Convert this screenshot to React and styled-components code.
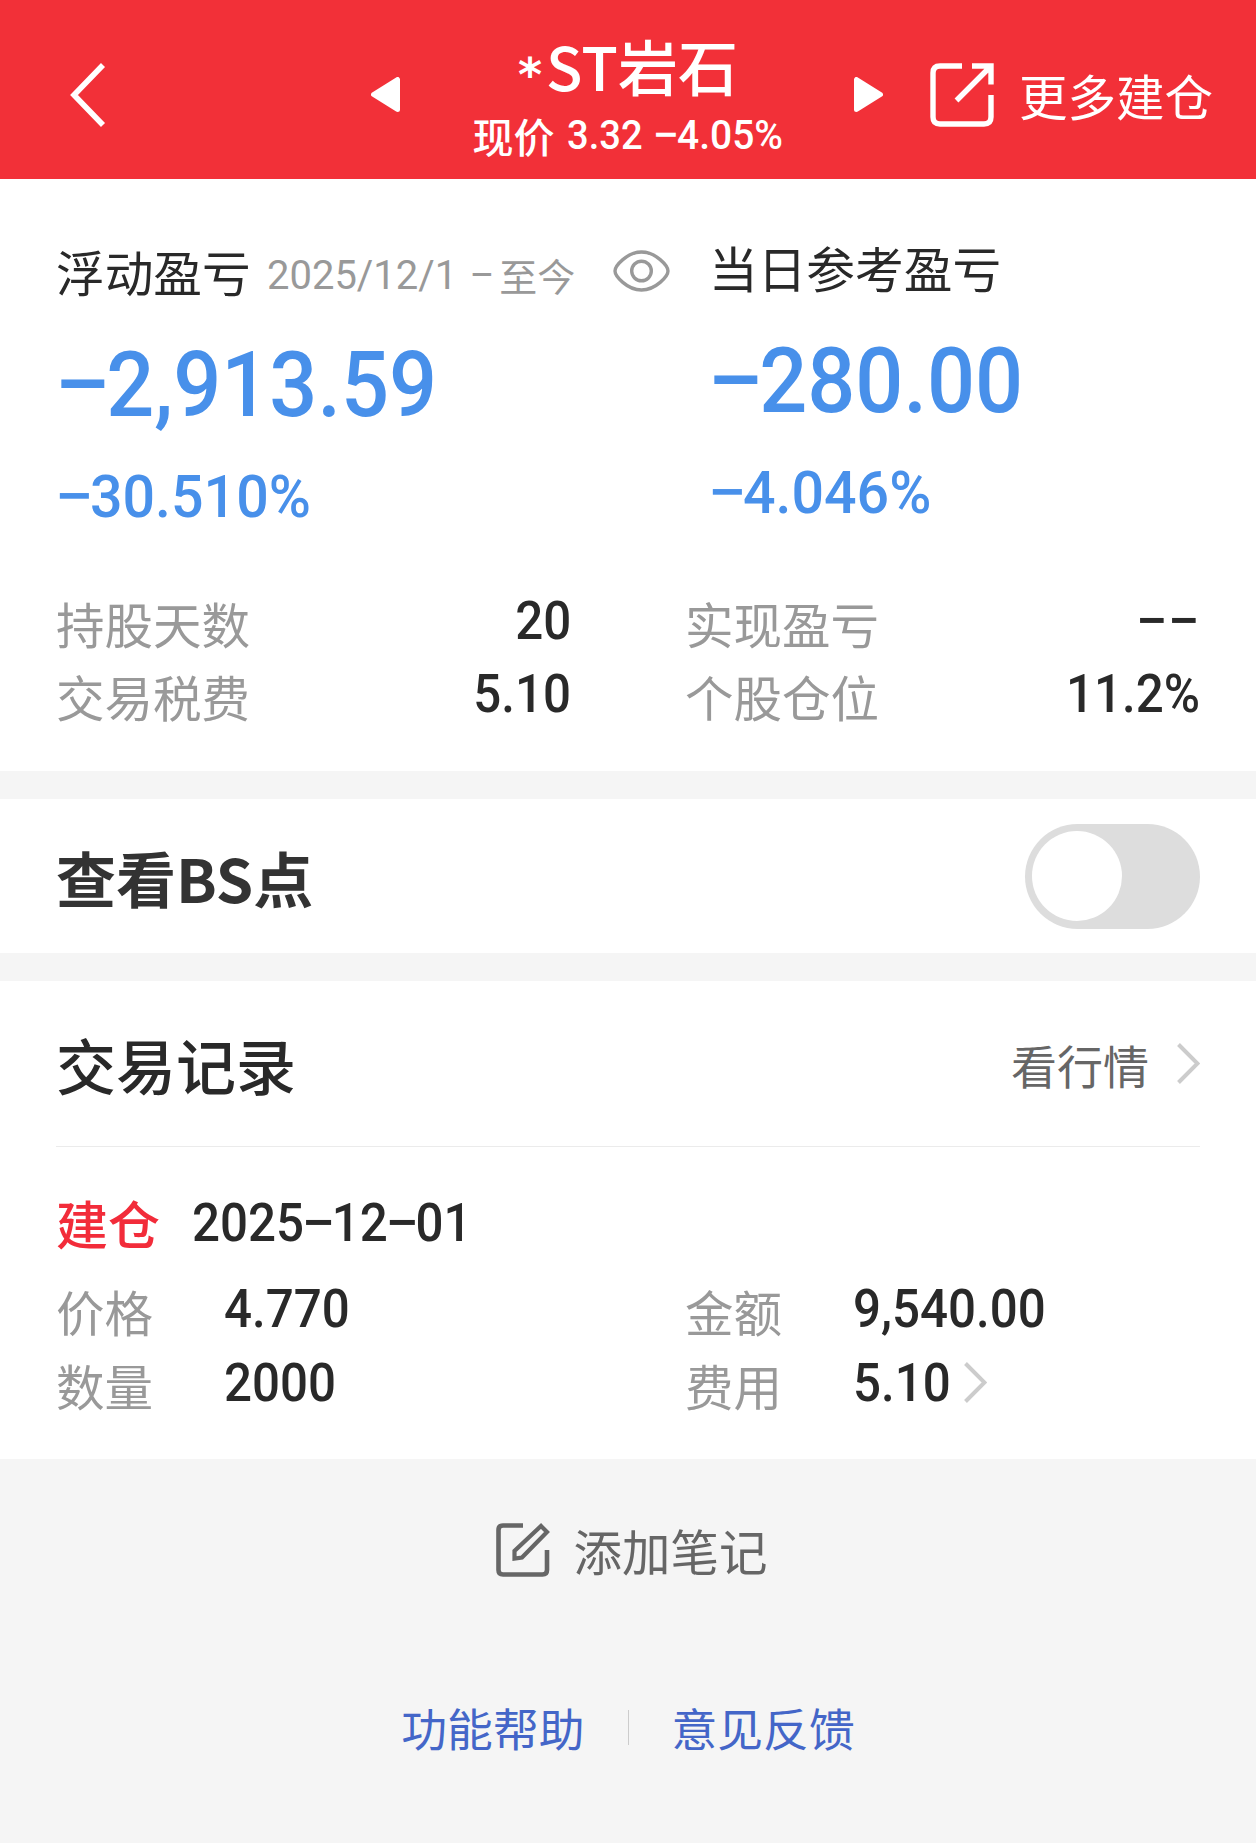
import { useState } from "react";
import styled, { createGlobalStyle } from 'styled-components';

const GlobalStyle = createGlobalStyle`
    * {
        box-sizing: border-box;
    }
    body {
        margin: 0;
        background: #f5f5f5;
        font-family: "Noto Sans CJK SC", "Liberation Sans", sans-serif;
        color: #292929;
    }
`

const Page = styled.div`
    width: 1256px;
    min-height: 1843px;
    background: #f5f5f5;
`

/* header */
const Header = styled.header`
    display: grid;
    grid-template-columns: 371px 29px 454px 29px 1fr;
    align-items: center;
    height: 179px;
    background: #f23038;
    color: white;
`

const BackButton = styled.button`
    display: flex;
    padding: 11px 0 0 70px;
    border: none;
    background: none;
`

const ArrowButton = styled.button`
    display: flex;
    padding: 10px 0 0;
    border: none;
    background: none;
`

const Heading = styled.div`
    display: flex;
    flex-direction: column;
    align-items: center;
    gap: 5px;
    padding-top: 15px;
`

const StockName = styled.h1`
    margin: 0;
    padding-left: 2px;
    font-size: 60px;
    font-weight: 500;
    line-height: 70px;
`

const Star = styled.span`
    margin-right: 4px;
    font-family: "DejaVu Sans", sans-serif;
    font-size: 46px;
    font-weight: 700;
    line-height: 0;
`

const StockPrice = styled.div`
    display: flex;
    gap: 13px;
    height: 60px;
    padding-left: 8px;
    font-size: 41px;
    font-weight: 500;
    line-height: 60px;
`

const MoreButton = styled.button`
    display: flex;
    align-items: center;
    gap: 25px;
    padding: 10px 0 0 47px;
    border: none;
    background: none;
    color: white;
    font-family: inherit;
    font-size: 48.5px;
    line-height: 60px;
    white-space: nowrap;
`

/* digits are set a little narrower than the font draws them */
const Digits = styled.span`
    display: inline-block;
    font-family: Roboto, "Liberation Sans", sans-serif;
    font-size: ${({ $size }) => $size || 53}px;
    font-weight: ${({ $weight }) => $weight || 500};
    line-height: ${({ $line }) => $line || 60}px;
    margin-left: ${({ $pull }) => $pull ? -8 : 0}px;
    white-space: nowrap;
    transform: scaleX(${({ $narrow }) => $narrow || 0.93});
    transform-origin: ${({ $right }) => $right ? 'right' : 'left'} center;
`

const Minus = styled.span`
    display: inline-block;
    margin-left: ${({ $lead }) => $lead ? 0.03 : 0}em;
    transform: scaleX(1.22);
`

const Panel = styled.section`
    background: white;
    margin-bottom: 28px;
`

/* profit summary */
const Summary = styled(Panel)`
    height: 592px;
    padding: 58px 56px 0;
`

const ProfitRow = styled.div`
    display: grid;
    grid-template-columns: 653px 1fr;
    height: 354px;
`

const Profit = styled.div`
    display: flex;
    flex-direction: column;
    padding-top: ${({ $lower }) => $lower ? 4 : 0}px;
    color: #4890ea;
`

const ProfitTitle = styled.div`
    display: flex;
    align-items: center;
    height: 60px;
    color: #292929;
    font-size: 48.7px;
    line-height: 60px;
    white-space: nowrap;
`

const Period = styled.span`
    display: flex;
    flex-shrink: 0;
    gap: 7px;
    width: 346px;
    margin-left: 16px;
    padding-top: 7px;
    color: #999;
    font-size: 38px;
    line-height: 60px;
`

const Amount = styled.div`
    margin-top: 34px;
    height: 100px;
`

const Percent = styled.div`
    margin-top: 32px;
    height: 60px;
`

const Stats = styled.div`
    display: grid;
    grid-template-columns: 515px 515px;
    column-gap: 114px;
`

const Stat = styled.div`
    display: flex;
    justify-content: space-between;
    height: 73px;
`

const Label = styled.span`
    color: #999;
    font-size: 48.5px;
    line-height: 60px;
    padding-top: 2px;
`

/* BS switch */
const SwitchPanel = styled(Panel)`
    display: flex;
    align-items: center;
    justify-content: space-between;
    height: 154px;
    padding: 0 56px;
    color: #333;
    font-size: 60px;
    font-weight: 700;
`

const Toggle = styled.button`
    width: 175px;
    height: 105px;
    padding: 7px;
    border: none;
    border-radius: 53px;
    background: ${({ $on }) => $on ? '#f23038' : '#ddd'};
`

const Knob = styled.span`
    display: block;
    width: 90px;
    height: 90px;
    border-radius: 50%;
    background: white;
    margin-left: ${({ $on }) => $on ? 71 : 0}px;
`

/* trade records */
const Records = styled(Panel)`
    height: 478px;
    margin-bottom: 0;
    padding: 0 56px;
`

const RecordsHead = styled.div`
    display: flex;
    align-items: center;
    justify-content: space-between;
    height: 166px;
    border-bottom: 1px solid #ebebeb;
`

const RecordsTitle = styled.h2`
    margin: 0;
    font-size: 60px;
    font-weight: 500;
    line-height: 80px;
`

const QuoteLink = styled.a`
    display: flex;
    align-items: center;
    gap: 28px;
    color: #666;
    font-size: 46px;
    line-height: 60px;
`

const TradeHead = styled.div`
    display: flex;
    gap: 32px;
    height: 90px;
    padding-top: 46px;
`

const TradeType = styled.span`
    color: #f22c3a;
    font-size: 52px;
    font-weight: 500;
    line-height: 60px;
`

const TradeGrid = styled.div`
    display: grid;
    grid-template-columns: 629px 1fr;
    padding-top: 42px;
`

const TradeField = styled.div`
    display: flex;
    height: 73.5px;

    ${Label} {
        width: 168px;
    }
`

const FeeLink = styled.a`
    display: flex;
    align-items: center;
    gap: 6px;
    height: 60px;
`

/* footer */
const NoteButton = styled.button`
    display: flex;
    align-items: center;
    justify-content: center;
    gap: 23px;
    width: 100%;
    height: 182px;
    padding: 0 0 0 8px;
    border: none;
    background: none;
    color: #666;
    font-family: inherit;
    font-size: 48.5px;
    line-height: 60px;
`

const Links = styled.nav`
    display: flex;
    align-items: center;
    justify-content: center;
    gap: 43px;
    height: 172px;
    color: #4466c8;
    font-size: 45.8px;
    line-height: 60px;
`

const LinkDivider = styled.span`
    width: 1px;
    height: 35px;
    background: #ccc;
`

// a minus in front of a digit is drawn wider than the font's own
function Num({ children, ...props }) {
    const parts = children.split(/(−(?=\d))/)

    return (
        <Digits {...props}>
            {parts.map((part, i) => (
                i % 2
                    ? <Minus key={i} $lead={!parts[i - 1]}>{part}</Minus>
                    : part
            ))}
        </Digits>
    )
}

function Chevron() {
    return (
        <svg width="23" height="41" viewBox="0 0 23 41" fill="none">
            <path d="M1.5 1.5L20.5 20.5L1.5 39.5" stroke="#ccc" strokeWidth="4" />
        </svg>
    )
}

function BackIcon() {
    return (
        <svg width="36" height="64" viewBox="0 0 36 64" fill="none">
            <path d="M33 2L4 32L33 62" stroke="white" strokeWidth="5.6" />
        </svg>
    )
}

function Triangle({ right }) {
    return (
        <svg width="29" height="35" viewBox="0 0 29 35">
            <path
                d={right
                    ? "M2.5 2.5V32.5L26.5 17.5Z"
                    : "M26.5 2.5V32.5L2.5 17.5Z"}
                fill="white" stroke="white" strokeWidth="5" strokeLinejoin="round"
            />
        </svg>
    )
}

function ShareIcon() {
    return (
        <svg width="64" height="64" viewBox="0 0 64 64" fill="none" stroke="white" strokeWidth="5.4">
            <path d="M32 3H10Q3 3 3 10V54Q3 61 10 61H54Q61 61 61 54V32" />
            <path d="M42 3H61V21.5M60 4L26.5 37.5" />
        </svg>
    )
}

function EyeIcon() {
    return (
        <svg width="57" height="42" viewBox="0 0 57 42" fill="none" stroke="#999" strokeWidth="3.4">
            <path d="M2 21C2 16 14 2 28.5 2S55 16 55 21S43 40 28.5 40S2 26 2 21Z" />
            <circle cx="28.5" cy="21" r="9.8" />
        </svg>
    )
}

function NoteIcon() {
    return (
        <svg width="54" height="54" viewBox="0 0 54 54" fill="none" stroke="#666" strokeWidth="4.6">
            <path d="M27 2.5H7Q2.5 2.5 2.5 7V47Q2.5 51.5 7 51.5H46.5Q51 51.5 51 47V27" />
            <path d="M18.5 35.5V28L45 3L51 9L26 34.5Z" strokeWidth="4.2" />
        </svg>
    )
}

const stats = [
    { label: '持股天数', value: '20' },
    { label: '实现盈亏', value: '−−', narrow: 1.07 },
    { label: '交易税费', value: '5.10' },
    { label: '个股仓位', value: '11.2%' },
]

const trade = [
    { label: '价格', value: '4.770' },
    { label: '金额', value: '9,540.00' },
    { label: '数量', value: '2000' },
    { label: '费用', value: '5.10', link: true },
]

function App() {
    const [showBS, setShowBS] = useState(false);

    return (
        <Page>
            <GlobalStyle />
            <Header>
                <BackButton><BackIcon /></BackButton>
                <ArrowButton><Triangle /></ArrowButton>
                <Heading>
                    <StockName><Star>*</Star>ST岩石</StockName>
                    <StockPrice>
                        <span>现价</span>
                        <Num $size={41}>3.32</Num>
                        <Num $size={41} $narrow={0.95} $pull>−4.05%</Num>
                    </StockPrice>
                </Heading>
                <ArrowButton><Triangle right /></ArrowButton>
                <MoreButton>
                    <ShareIcon />
                    <span>更多建仓</span>
                </MoreButton>
            </Header>

            <Summary>
                <ProfitRow>
                    <Profit $lower>
                        <ProfitTitle>
                            浮动盈亏
                            <Period>
                                <Num $size={41} $weight={400} $narrow={0.975}>2025/12/1</Num>
                                <Num $size={41} $weight={400} $narrow={1.1}>−</Num>
                                <span>至今</span>
                            </Period>
                            <EyeIcon />
                        </ProfitTitle>
                        <Amount><Num $size={91} $line={100}>−2,913.59</Num></Amount>
                        <Percent><Num $size={60} $narrow={0.955}>−30.510%</Num></Percent>
                    </Profit>
                    <Profit>
                        <ProfitTitle>当日参考盈亏</ProfitTitle>
                        <Amount><Num $size={91} $line={100}>−280.00</Num></Amount>
                        <Percent><Num $size={60} $narrow={0.955}>−4.046%</Num></Percent>
                    </Profit>
                </ProfitRow>
                <Stats>
                    {stats.map(({ label, value, narrow }) => (
                        <Stat key={label}>
                            <Label>{label}</Label>
                            <Num $right $narrow={narrow}>{value}</Num>
                        </Stat>
                    ))}
                </Stats>
            </Summary>

            <SwitchPanel>
                <span>查看BS点</span>
                <Toggle $on={showBS} onClick={() => setShowBS(!showBS)}>
                    <Knob $on={showBS} />
                </Toggle>
            </SwitchPanel>

            <Records>
                <RecordsHead>
                    <RecordsTitle>交易记录</RecordsTitle>
                    <QuoteLink>
                        看行情
                        <Chevron />
                    </QuoteLink>
                </RecordsHead>
                <TradeHead>
                    <TradeType>建仓</TradeType>
                    <Num>2025−12−01</Num>
                </TradeHead>
                <TradeGrid>
                    {trade.map(({ label, value, link }) => (
                        <TradeField key={label}>
                            <Label>{label}</Label>
                            {link
                                ? <FeeLink><Num>{value}</Num><Chevron /></FeeLink>
                                : <Num>{value}</Num>}
                        </TradeField>
                    ))}
                </TradeGrid>
            </Records>

            <NoteButton>
                <NoteIcon />
                <span>添加笔记</span>
            </NoteButton>
            <Links>
                <a>功能帮助</a>
                <LinkDivider />
                <a>意见反馈</a>
            </Links>
        </Page>
    )
}

export default App;
